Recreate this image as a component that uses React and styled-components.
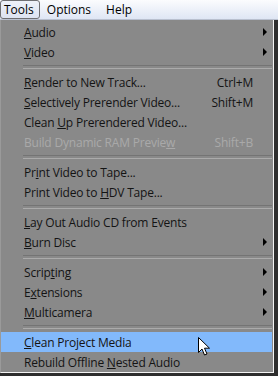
import styled, { createGlobalStyle } from "styled-components"

const Global = createGlobalStyle`
    html, body {
        margin: 0;
        padding: 0;
        background: #3c3c3c;
        width: 278px;
        height: 376px;
        overflow: hidden;
    }
    * { box-sizing: border-box; }
`
const Page = styled.div`
    width: 278px;
    height: 376px;
    display: flex;
    flex-direction: column;
    font-family: "Open Sans", "Noto Sans", sans-serif;
    font-size: 12px;
    background: #2e2e2e;
`
const MenuBar = styled.div`
    height: 20px;
    display: flex;
    align-items: stretch;
    background: linear-gradient(#fbfcfe, #dfe6f4);
    border-bottom: 1px solid #b9c0cf;
`
const BarItem = styled.div`
    display: flex;
    align-items: center;
    padding: 0 ${p => p.active ? "5px" : "8px"} 0 ${p => p.active ? "3px" : "7px"};
    color: #000;
    ${p => p.active && `
        border: 1px solid #6f6f72;
        border-radius: 3px;
        background: linear-gradient(#eef1f8, #dde3f1);
    `}
`
const Body = styled.div`
    flex: 1;
    display: flex;
`
const Panel = styled.div`
    width: 274px;
    height: 353px;
    background: #898989;
    border-right: 1px solid #f4f4f4;
    border-bottom: 1px solid #f4f4f4;
    border-left: 1px solid #9a9a9a;
    padding-top: 2px;
    display: flex;
    flex-direction: column;
`
const Item = styled.div`
    height: 20px;
    flex-shrink: 0;
    display: flex;
    align-items: center;
    padding-left: 23px;
    padding-right: 5px;
    margin-right: 1px;
    position: relative;
    color: ${p => p.disabled ? "#a9a9a9" : "#141414"};
    background: ${p => p.hot ? "#82b9fb" : "transparent"};
    letter-spacing: -0.2px;

    u { text-underline-offset: 1px; }
`
const Label = styled.span`
    flex: 1;
    white-space: nowrap;
`
const Shortcut = styled.span`
    width: 60px;
    text-align: right;
    margin-right: 14px;
`
const Arrow = styled.span`
    width: 0;
    height: 0;
    border-top: 4px solid transparent;
    border-bottom: 4px solid transparent;
    border-left: 4px solid #000;
`
const Separator = styled.div`
    height: 10px;
    flex-shrink: 0;
    margin: 0 1px 0 22px;
    display: flex;
    align-items: center;

    &::after {
        content: "";
        flex: 1;
        height: 2px;
        border-top: 1px solid #747474;
        border-bottom: 1px solid #ababab;
    }
`
const Cursor = styled.svg`
    position: absolute;
    left: 197px;
    top: 5px;
`

function MenuItem({ label, shortcut, sub, disabled, hot }) {
    return (
        <Item disabled={disabled} hot={hot}>
            <Label>{label}</Label>
            {shortcut && <Shortcut>{shortcut}</Shortcut>}
            {sub && <Arrow />}
            {hot && (
                <Cursor width="13" height="20" viewBox="0 0 13 20">
                    <path d="M0.5 0.5 L0.5 15.5 L4 12 L6.5 18 L9 17 L6.5 11.2 L11.5 11.2 Z" fill="#fff" stroke="#000" strokeWidth="1" />
                </Cursor>
            )}
        </Item>
    )
}

export default function App() {
    return (
        <Page>
            <Global />
            <MenuBar>
                <BarItem active>Tools</BarItem>
                <BarItem>Options</BarItem>
                <BarItem>Help</BarItem>
            </MenuBar>
            <Body>
                <Panel>
                    <MenuItem label={<><u>A</u>udio</>} sub />
                    <MenuItem label={<><u>V</u>ideo</>} sub />
                    <Separator />
                    <MenuItem label={<><u>R</u>ender to New Track...</>} shortcut="Ctrl+M" />
                    <MenuItem label={<><u>S</u>electively Prerender Video...</>} shortcut="Shift+M" />
                    <MenuItem label={<>Clean <u>U</u>p Prerendered Video...</>} />
                    <MenuItem disabled label={<>Build Dynamic RAM Previe<u>w</u></>} shortcut="Shift+B" />
                    <Separator />
                    <MenuItem label={<>Pr<u>i</u>nt Video to Tape...</>} />
                    <MenuItem label={<>Print Video to <u>H</u>DV Tape...</>} />
                    <Separator />
                    <MenuItem label={<><u>L</u>ay Out Audio CD from Events</>} />
                    <MenuItem label={<><u>B</u>urn Disc</>} sub />
                    <Separator />
                    <MenuItem label={<>Scrip<u>t</u>ing</>} sub />
                    <MenuItem label={<>E<u>x</u>tensions</>} sub />
                    <MenuItem label={<><u>M</u>ulticamera</>} sub />
                    <Separator />
                    <MenuItem hot label={<><u>C</u>lean Project Media</>} />
                    <MenuItem label={<>Rebuild Offline <u>N</u>ested Audio</>} />
                </Panel>
            </Body>
        </Page>
    )
}
